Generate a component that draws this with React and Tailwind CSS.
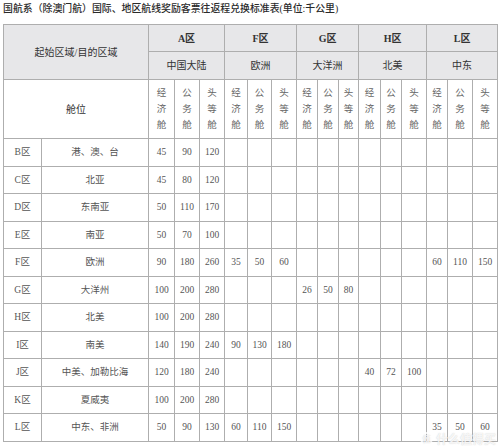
import React from "react";

const zones = [
  { code: "A区", name: "中国大陆" },
  { code: "F区", name: "欧洲" },
  { code: "G区", name: "大洋洲" },
  { code: "H区", name: "北美" },
  { code: "L区", name: "中东" },
];

const widths = [38, 107, 26, 25, 25, 23, 24, 25, 21, 21, 20, 22, 21, 25, 21, 25, 25];

const classes = [
  ["经", "济", "舱"],
  ["公", "务", "舱"],
  ["头", "等", "舱"],
];

// 15 values per row: A, F, G, H, L (economy, business, first)
const rows = [
  ["B区", "港、澳、台", ["45", "90", "120"]],
  ["C区", "北亚", ["45", "80", "120"]],
  ["D区", "东南亚", ["50", "110", "170"]],
  ["E区", "南亚", ["50", "70", "100"]],
  ["F区", "欧洲", ["90", "180", "260", "35", "50", "60", "", "", "", "", "", "", "60", "110", "150"]],
  ["G区", "大洋州", ["100", "200", "280", "", "", "", "26", "50", "80"]],
  ["H区", "北美", ["100", "200", "280"]],
  ["I区", "南美", ["140", "190", "240", "90", "130", "180"]],
  ["J区", "中美、加勒比海", ["120", "180", "240", "", "", "", "", "", "", "40", "72", "100"]],
  ["K区", "夏威夷", ["100", "200", "280"]],
  ["L区", "中东、非洲", ["50", "90", "130", "60", "110", "150", "", "", "", "", "", "", "35", "50", "60"]],
];

const cell = "border-[1.5px] border-[#aeaeae] text-center align-middle p-0";

export default function App() {
  return (
    <div
      className="relative w-[500px] h-[446px] bg-white overflow-hidden text-[#333]"
      style={{ fontFamily: '"Liberation Serif", "Noto Sans CJK SC", serif' }}
    >
      <div className="pl-[3px] pt-[2px] h-[24px] text-[9.9px] leading-[14px] font-medium text-[#2a2a2a]">
        国航系（除澳门航）国际、地区航线奖励客票往返程兑换标准表(单位:千公里)
      </div>

      <table className="ml-[3px] table-fixed border-collapse w-[494px] text-[9.5px]">
        <colgroup>
          {widths.map((w, i) => (
            <col key={i} style={{ width: w }} />
          ))}
        </colgroup>
        <tbody>
          <tr className="h-[27px] bg-[#e7e7e9]">
            <td colSpan={2} rowSpan={2} className={`${cell} text-[10px]`}>
              起始区域/目的区域
            </td>
            {zones.map((z) => (
              <td key={z.code} colSpan={3} className={`${cell} font-semibold text-[10px]`}>
                {z.code}
              </td>
            ))}
          </tr>
          <tr className="h-[28px] bg-[#e7e7e9]">
            {zones.map((z) => (
              <td key={z.name} colSpan={3} className={`${cell} text-[10px]`}>
                {z.name}
              </td>
            ))}
          </tr>
          <tr className="h-[59px]">
            <td colSpan={2} className={`${cell} text-[10px]`}>
              舱位
            </td>
            {zones.flatMap((z) =>
              classes.map((c, i) => (
                <td key={z.code + i} className={`${cell} text-[#666]`}>
                  <div className="flex flex-col items-center leading-[16px] text-[9.5px]">
                    {c.map((ch, j) => (
                      <span key={j}>{ch}</span>
                    ))}
                  </div>
                </td>
              ))
            )}
          </tr>
          {rows.map(([code, name, vals]) => (
            <tr key={code} className="h-[27.5px] text-[#555]">
              <td className={cell}>{code}</td>
              <td className={cell}>{name}</td>
              {Array.from({ length: 15 }).map((_, i) => (
                <td key={i} className={cell}>
                  {vals[i] || ""}
                </td>
              ))}
            </tr>
          ))}
        </tbody>
      </table>

      <div
        className="absolute right-[4px] bottom-[1px] flex items-center gap-[3px] text-[12px] leading-[13px] text-white/80 font-bold"
        style={{ fontFamily: '"Noto Sans CJK SC", sans-serif', textShadow: "0 0 1px rgba(150,150,150,0.5)" }}
      >
        <span className="w-[13px] h-[13px] rounded-full border-[2px] border-white/80 flex items-center justify-center text-[8px]">
          值
        </span>
        <span>什么值得买</span>
      </div>
    </div>
  );
}
